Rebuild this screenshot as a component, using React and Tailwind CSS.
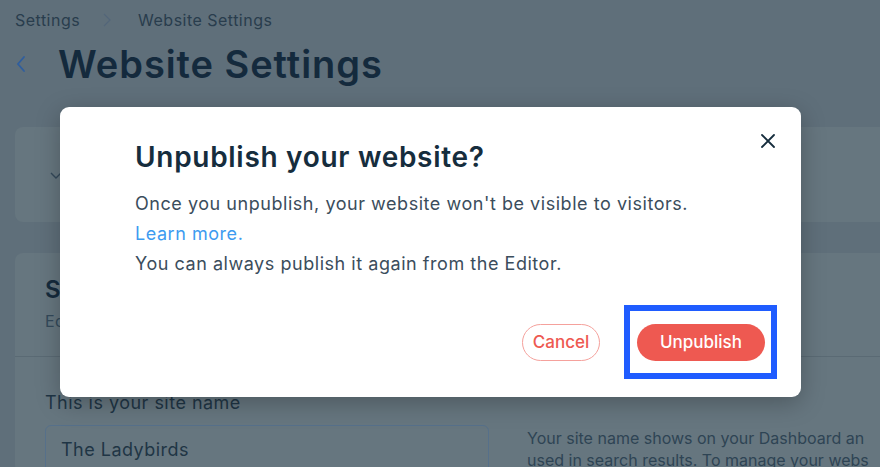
import React from 'react';

const font = { fontFamily: 'Inter, "Noto Sans", "Liberation Sans", sans-serif' };

const CloseIcon = () => (
  <svg width="16" height="16" viewBox="0 0 16 16" fill="none" stroke="currentColor" strokeWidth="1.8" strokeLinecap="round">
    <path d="M2 2l12 12M14 2L2 14" />
  </svg>
);

const UnpublishModal = () => (
  <div className="absolute left-[60px] top-[107px] w-[741px] h-[290px] bg-white rounded-[9px] shadow-[0_6px_24px_rgba(0,0,0,0.25)] pl-[75px] pr-[36px] pt-[32px] pb-[36px] flex flex-col">
    <button className="absolute right-[25px] top-[26px] text-[#162d3d]">
      <CloseIcon />
    </button>
    <h2 className="text-[28px] leading-[36px] font-semibold tracking-[0.025em] text-[#162d3d]">Unpublish your website?</h2>
    <div className="mt-[14px] text-[18px] leading-[30px] tracking-[0.03em] text-[#3b4d5c]">
      <p>Once you unpublish, your website won't be visible to visitors.</p>
      <a className="text-[#3d9bf0]">Learn more.</a>
      <p>You can always publish it again from the Editor.</p>
    </div>
    <div className="mt-auto flex justify-end gap-[37px] tracking-normal">
      <button className="h-[37px] w-[78px] rounded-full border border-[#f5a19c] text-[#ee5951] text-[17px] font-medium">Cancel</button>
      <div className="relative">
        <button className="h-[37px] w-[128px] rounded-full bg-[#ee5951] text-white text-[17px] font-medium">Unpublish</button>
        {/* highlight frame */}
        <div className="absolute -left-[13px] -right-[12px] -top-[19px] -bottom-[18px] border-[6px] border-[#1f5cff]" />
      </div>
    </div>
  </div>
);

export default function App() {
  return (
    <div className="relative w-[880px] h-[467px] overflow-hidden bg-[#5f6f7a] tracking-[0.03em]" style={font}>
      {/* Breadcrumb */}
      <div className="flex items-center h-[40px] px-[15px] text-[16px] text-[#293d4d]">
        <span>Settings</span>
        <svg className="ml-[22px] mr-[26px]" width="10" height="14" viewBox="0 0 10 14" fill="none" stroke="#53667a" strokeWidth="1.2">
          <path d="M2 1l6 6-6 6" />
        </svg>
        <span>Website Settings</span>
      </div>
      {/* Title */}
      <div className="flex items-center h-[50px] -mt-[1px]">
        <svg className="ml-[15px] mr-[31px]" width="12" height="20" viewBox="0 0 12 20" fill="none" stroke="#2f5e9e" strokeWidth="1.8" strokeLinecap="round">
          <path d="M9 3L3 10l6 7" />
        </svg>
        <h1 className="text-[38px] font-semibold tracking-[0.025em] text-[#142a3d]">Website Settings</h1>
      </div>
      {/* Cards */}
      <div className="ml-[15px] mt-[38px] flex flex-col gap-[31px]">
        <div className="h-[95px] w-[900px] rounded-[8px] bg-[#66767f] flex items-center pl-[34px]">
          <svg width="14" height="10" viewBox="0 0 14 10" fill="none" stroke="#34495a" strokeWidth="1.4">
            <path d="M2 3l5 5 5-5" />
          </svg>
        </div>
        <div className="w-[900px] rounded-[8px] bg-[#66767f]">
          <div className="pl-[30px] pt-[22px] h-[104px] border-b border-[#5a6a74]">
            <div className="text-[24px] font-semibold text-[#152b3d] leading-[30px]">Site name</div>
            <div className="text-[16px] text-[#33495a] mt-[4px]">Edit your site name and how it appears.</div>
          </div>
          <div className="pl-[30px] pt-[33px] flex">
            <div className="w-[444px]">
              <div className="text-[18px] text-[#1f3545] leading-[26px]">This is your site name</div>
              <div className="mt-[9px] h-[48px] rounded-[6px] border border-[#56708a] pl-[15px] flex items-center text-[18px] text-[#1f3545]">The Ladybirds</div>
            </div>
            <div className="ml-[38px] mt-[37px] text-[16px] leading-[22px] tracking-normal text-[#2e4454] w-[353px] whitespace-nowrap">
              <div>Your site name shows on your Dashboard an</div>
              <div>used in search results. To manage your webs</div>
            </div>
          </div>
        </div>
      </div>
      <UnpublishModal />
    </div>
  );
}
